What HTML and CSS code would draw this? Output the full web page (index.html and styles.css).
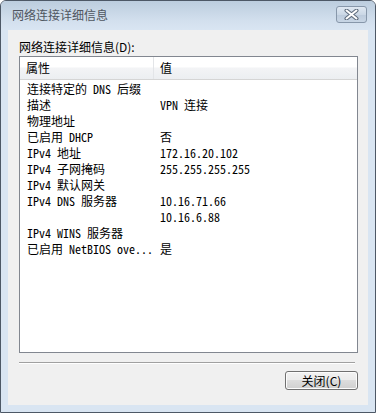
FILE: index.html
```html
<!DOCTYPE html>
<html lang="zh">

<head>
    <meta charset="UTF-8">
    <title>网络连接详细信息</title>
    <link rel="stylesheet" href="styles.css">
</head>

<body>
    <div class="window">
        <div class="titlebar">
            <span class="title">网络连接详细信息</span>
            <div class="close-btn">
                <svg width="15" height="11" viewBox="0 0 15 11">
                    <path d="M2.5 1.5 L12.5 9.5 M12.5 1.5 L2.5 9.5" stroke="#5d6b7c" stroke-width="4" stroke-linecap="round"/>
                    <path d="M2.5 1.5 L12.5 9.5 M12.5 1.5 L2.5 9.5" stroke="#fff" stroke-width="2" stroke-linecap="round"/>
                </svg>
            </div>
        </div>
        <div class="client">
            <div class="label">网络连接详细信息(D):</div>
            <div class="list">
                <div class="list-head">
                    <div class="head-cell head-name">属性</div>
                    <div class="head-cell head-value">值</div>
                </div>
                <div class="list-body">
                    <div class="row"><span>连接特定的 DNS 后缀</span><span></span></div>
                    <div class="row"><span>描述</span><span>VPN 连接</span></div>
                    <div class="row"><span>物理地址</span><span></span></div>
                    <div class="row"><span>已启用 DHCP</span><span>否</span></div>
                    <div class="row"><span>IPv4 地址</span><span>172.16.20.102</span></div>
                    <div class="row"><span>IPv4 子网掩码</span><span>255.255.255.255</span></div>
                    <div class="row"><span>IPv4 默认网关</span><span></span></div>
                    <div class="row"><span>IPv4 DNS 服务器</span><span>10.16.71.66</span></div>
                    <div class="row"><span></span><span>10.16.6.88</span></div>
                    <div class="row"><span>IPv4 WINS 服务器</span><span></span></div>
                    <div class="row"><span>已启用 NetBIOS ove...</span><span>是</span></div>
                </div>
            </div>
            <div class="separator"></div>
            <div class="actions">
                <button class="btn">关闭(C)</button>
            </div>
        </div>
    </div>
</body>

</html>
```

FILE: styles.css
```css
html,
body {
    margin: 0;
    background: #fff;
}

body {
    font-family: "Noto Sans Mono CJK SC", "Liberation Mono", "Noto Sans CJK SC", monospace;
    font-size: 12px;
    color: #000;
}

.window {
    width: 376px;
    height: 413px;
    box-sizing: border-box;
    border: 1px solid #4d5866;
    border-radius: 6px 6px 0 0;
    background: #d9e5f2;
    padding: 0 7px 7px;
    display: flex;
    flex-direction: column;
}

.titlebar {
    height: 29px;
    margin: 0 -7px;
    padding: 0 8px 0 11px;
    border-radius: 5px 5px 0 0;
    background: linear-gradient(#bccdde, #d3e0ee 70%, #d9e5f2);
    display: flex;
    align-items: center;
    justify-content: space-between;
}

.title {
    color: #4f5660;
    font-family: "Noto Sans CJK SC", sans-serif;
    font-size: 12px;
    margin-top: -3px;
}

.close-btn {
    width: 29px;
    height: 15px;
    border: 1px solid #8797aa;
    border-radius: 3px;
    background: linear-gradient(#dfe8f2, #cbd8e6 50%, #bccbdc 51%, #c8d6e5);
    display: flex;
    align-items: center;
    justify-content: center;
    margin-top: -2px;
}

.client {
    flex: 1;
    background: #f0f0f0;
    padding: 10px 10px 14px 11px;
    display: flex;
    flex-direction: column;
}

.label {
    line-height: 14px;
    font-family: "Noto Sans CJK SC", sans-serif;
}

.list {
    margin-top: 2px;
    height: 297px;
    box-sizing: border-box;
    border: 1px solid #828790;
    background: #fff;
}

.list-head {
    display: flex;
    height: 23px;
    box-sizing: border-box;
    border-bottom: 1px solid #d5d5d5;
    background: linear-gradient(#fff, #fff 45%, #f3f4f6 50%, #eceef1);
}

.head-cell {
    line-height: 22px;
    font-family: "Noto Sans CJK SC", sans-serif;
}

.head-name {
    width: 127px;
    padding-left: 6px;
    border-right: 1px solid #e3e5e8;
}

.head-value {
    padding-left: 6px;
}

.list-body {
    padding-top: 1px;
}

.row {
    display: grid;
    grid-template-columns: 133px 1fr;
    height: 16px;
    line-height: 16px;
    padding-left: 7px;
    white-space: pre;
}

.separator {
    margin: 9px 3px 0 0;
    height: 1px;
    border-top: 1px solid #a0a0a0;
    background: #fff;
}

.actions {
    display: flex;
    justify-content: flex-end;
    margin-top: 7px;
}

.btn {
    width: 73px;
    height: 19px;
    padding: 0;
    border: 1px solid #707070;
    border-radius: 3px;
    background: linear-gradient(#f2f2f2, #ebebeb 49%, #dddddd 50%, #cfcfcf);
    box-shadow: inset 0 0 0 1px #fcfcfc;
    font-family: "Noto Sans CJK SC", sans-serif;
    font-size: 12px;
    color: #000;
    line-height: 16px;
}
```
